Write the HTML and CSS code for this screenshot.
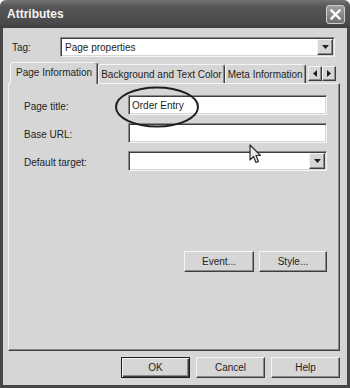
FILE: index.html
```html
<!DOCTYPE html>
<html lang="en">
<head>
  <meta charset="UTF-8">
  <meta name="viewport" content="width=device-width, initial-scale=1.0">
  <title>Attributes</title>
  <link rel="stylesheet" href="styles.css">
</head>
<body>

  <div class="window">
    <div class="titlebar">
      <span class="title">Attributes</span>
      <span class="close">
        <svg width="11" height="11" viewBox="0 0 11 11"><path d="M1.5 1.5 L9.5 9.5 M9.5 1.5 L1.5 9.5" stroke="#fff" stroke-width="2.4" stroke-linecap="square"/></svg>
      </span>
    </div>

    <div class="window-body">
      <div class="tag-row">
        <span class="tag-label">Tag:</span>
        <div class="combo">
          <span class="combo-text">Page properties</span>
          <span class="drop-btn"><svg width="7" height="4" viewBox="0 0 7 4"><path d="M0 0 H7 L3.5 4 Z" fill="#1e1e1e"/></svg></span>
        </div>
      </div>

      <div class="tabstrip">
        <div class="tabs">
          <div class="tab active">Page Information</div>
          <div class="tab">Background and Text Color</div>
          <div class="tab">Meta Information</div>
        </div>
        <div class="tab-scroll">
          <span class="scroll-btn"><svg width="4" height="7" viewBox="0 0 4 7"><path d="M4 0 V7 L0 3.5 Z" fill="#1e1e1e"/></svg></span>
          <span class="scroll-btn"><svg width="4" height="7" viewBox="0 0 4 7"><path d="M0 0 V7 L4 3.5 Z" fill="#1e1e1e"/></svg></span>
        </div>
      </div>

      <div class="panel">
        <div class="form-row">
          <span class="field-label">Page title:</span>
          <div class="field">Order Entry</div>
        </div>
        <div class="form-row">
          <span class="field-label">Base URL:</span>
          <div class="field"></div>
        </div>
        <div class="form-row">
          <span class="field-label">Default target:</span>
          <div class="combo">
            <span class="combo-text"></span>
            <span class="drop-btn"><svg width="7" height="4" viewBox="0 0 7 4"><path d="M0 0 H7 L3.5 4 Z" fill="#1e1e1e"/></svg></span>
          </div>
        </div>
        <div class="panel-actions">
          <button class="btn btn-event">Event...</button>
          <button class="btn btn-style">Style...</button>
        </div>
      </div>

      <div class="dialog-actions">
        <button class="btn btn-default">OK</button>
        <button class="btn">Cancel</button>
        <button class="btn">Help</button>
      </div>
    </div>

    <!-- hand-drawn circle round the title -->
    <svg class="annotation" width="92" height="48" viewBox="0 0 92 48">
      <ellipse cx="45" cy="23" rx="41" ry="19.5" fill="none" stroke="#1e1e1e" stroke-width="2"/>
    </svg>

    <svg class="cursor" width="13" height="20" viewBox="0 0 13 20">
      <path d="M1 1 L1 16 L4.5 12.5 L7 18.5 L9.5 17.5 L7 11.5 L11.5 11.5 Z" fill="#e8e8e8" stroke="#2a2a2a" stroke-width="1.2" stroke-linejoin="round"/>
    </svg>
  </div>

</body>
</html>
```

FILE: styles.css
```css
* {
  box-sizing: border-box;
}

body {
  margin: 0;
  font-family: "Liberation Sans", Arial, sans-serif;
  font-size: 10px;
  color: #1e1e1e;
  background-color: #fff;
}

.window {
  position: relative;
  width: 350px;
  height: 388px;
  display: flex;
  flex-direction: column;
  border-radius: 6px 6px 0 0;
  overflow: hidden;
  background-color: #d6d6d6;
}

.titlebar {
  height: 28px;
  flex: none;
  display: flex;
  align-items: center;
  justify-content: space-between;
  padding: 0 5px 0 7px;
  background: linear-gradient(#747474, #555 25%, #4b4b4b 80%, #404040);
  color: #f4f4f4;
}

.title {
  font-size: 12px;
  font-weight: bold;
}

.close {
  width: 19px;
  height: 19px;
  display: flex;
  align-items: center;
  justify-content: center;
  border: 1px solid #cfcfcf;
  border-radius: 3px;
  background: linear-gradient(#a0a0a0, #727272);
}

.window-body {
  flex: 1;
  display: flex;
  flex-direction: column;
  border: 3px solid #474747;
  border-top: 0;
}

.tag-row {
  display: flex;
  height: 20px;
  margin: 9px 12px 0 9px;
}

.tag-label {
  width: 48px;
  display: flex;
  align-items: center;
}

.combo {
  flex: 1;
  display: flex;
  align-items: center;
  padding: 1px;
  background-color: #fff;
  border: 1px solid;
  border-color: #8a8a8a #f4f4f4 #f4f4f4 #8a8a8a;
  box-shadow: inset 1px 1px #3e3e3e, inset -1px -1px #d6d6d6;
}

.combo-text {
  flex: 1;
  padding-left: 3px;
}

.drop-btn, .scroll-btn {
  display: flex;
  align-items: center;
  justify-content: center;
  background-color: #d6d6d6;
  border: 1px solid;
  border-color: #f4f4f4 #3e3e3e #3e3e3e #f4f4f4;
  box-shadow: inset -1px -1px #8a8a8a;
}

.drop-btn {
  width: 16px;
  height: 16px;
}

.tabstrip {
  position: relative;
  z-index: 1;
  display: flex;
  height: 22px;
  margin: 5px 7px 0 5px;
  padding-left: 2px;
}

.tabs {
  flex: 1;
  min-width: 0;
  display: flex;
  align-items: flex-start;
  overflow: hidden;
}

.tab {
  flex: none;
  height: 19px;
  margin-top: 2px;
  padding: 0 2px;
  display: flex;
  align-items: center;
  white-space: nowrap;
  border: 1px solid;
  border-bottom: 0;
  border-color: #f4f4f4 #3e3e3e transparent #f4f4f4;
  border-radius: 3px 3px 0 0;
  box-shadow: inset -1px 0 #8a8a8a;
}

.tab.active {
  height: 22px;
  margin-top: 0;
  padding: 0 5px 2px;
  background-color: #d6d6d6;
}

.tab-scroll {
  display: flex;
  margin: 4px 4px 0 0;
}

.scroll-btn {
  width: 14px;
  height: 15px;
}

.panel {
  height: 268px;
  margin: -1px 7px 0 5px;
  padding: 11px 12px 0 15px;
  display: flex;
  flex-direction: column;
  gap: 8px;
  border: 1px solid;
  border-color: #f4f4f4 #3e3e3e #3e3e3e #f4f4f4;
  box-shadow: inset -1px -1px #8a8a8a;
}

.form-row {
  display: flex;
  height: 20px;
}

.field-label {
  width: 104px;
  display: flex;
  align-items: center;
  padding-top: 2px;
}

.field {
  flex: 1;
  display: flex;
  align-items: center;
  padding-left: 3px;
  background-color: #fff;
  border: 1px solid;
  border-color: #8a8a8a #f4f4f4 #f4f4f4 #8a8a8a;
  box-shadow: inset 1px 1px #3e3e3e, inset -1px -1px #d6d6d6;
}

.panel-actions {
  display: flex;
  justify-content: flex-end;
  gap: 5px;
  margin-top: 72px;
}

.btn {
  height: 21px;
  padding: 0;
  font: inherit;
  color: inherit;
  background-color: #d6d6d6;
  border: 1px solid;
  border-color: #f4f4f4 #3e3e3e #3e3e3e #f4f4f4;
  box-shadow: inset -1px -1px #8a8a8a;
}

.btn-event {
  width: 70px;
}

.btn-style {
  width: 68px;
}

.dialog-actions {
  display: flex;
  justify-content: flex-end;
  gap: 6px;
  margin: 6px 7px 0 0;
}

.dialog-actions .btn {
  width: 69px;
}

.btn-default {
  border-color: #1e1e1e;
  box-shadow: inset 1px 1px #f4f4f4, inset -1px -1px #3e3e3e, inset -2px -2px #8a8a8a;
}

/* overlays: the pen circle and the mouse pointer */
.annotation {
  position: absolute;
  left: 112px;
  top: 84px;
}

.cursor {
  position: absolute;
  left: 249px;
  top: 144px;
}
```
